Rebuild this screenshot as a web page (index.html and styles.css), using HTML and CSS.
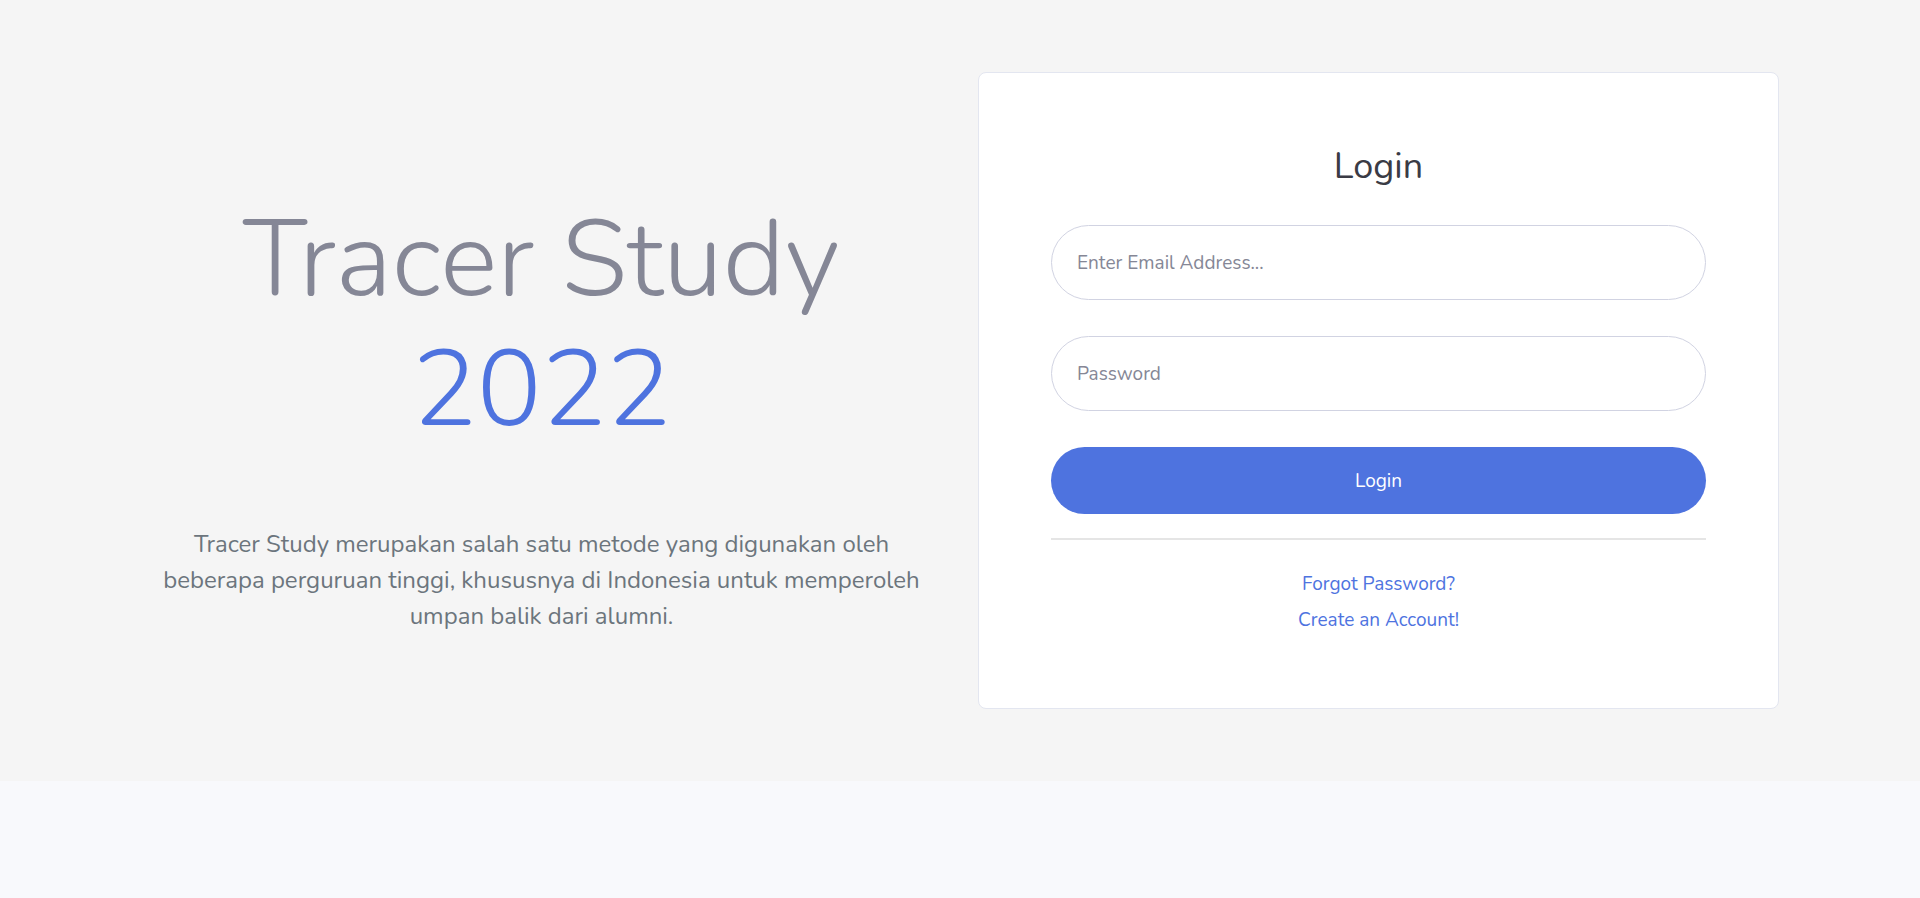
FILE: index.html
```html
<!DOCTYPE html>
<html lang="id">
<head>
<meta charset="utf-8">
<meta name="viewport" content="width=device-width, initial-scale=1">
<title>Tracer Study - Login</title>
<link rel="stylesheet" href="styles.css">
</head>
<body>
<main class="hero">
  <div class="container">
    <section class="intro">
      <h1 class="intro-title">Tracer Study <span class="intro-year">2022</span></h1>
      <p class="intro-text">Tracer Study merupakan salah satu metode yang digunakan oleh beberapa perguruan tinggi, khususnya di Indonesia untuk memperoleh umpan balik dari alumni.</p>
    </section>
    <section class="card">
      <h2 class="card-title">Login</h2>
      <form class="login-form">
        <input class="field" type="email" name="email" placeholder="Enter Email Address..." aria-label="Email address">
        <input class="field" type="password" name="password" placeholder="Password" aria-label="Password">
        <button class="submit" type="submit">Login</button>
      </form>
      <hr class="divider">
      <div class="link-row"><a class="link" href="#forgot">Forgot Password?</a></div>
      <div class="link-row"><a class="link" href="#register">Create an Account!</a></div>
    </section>
  </div>
</main>
</body>
</html>
```
FILE: styles.css
```css
*, *::before, *::after { box-sizing: border-box; }

body {
  margin: 0;
  background: #f8f9fc;
  color: #858796;
  font-family: Nunito, Lato, sans-serif;
  font-size: 24px;
  line-height: 36px;
}

.hero {
  background: #f5f5f5;
  padding: 72px 0;
}

.container {
  display: grid;
  grid-template-columns: repeat(2, minmax(0, 1fr));
  gap: 36px;
  max-width: 1710px;
  margin: 0 auto;
  padding: 0 36px;
}

.intro {
  padding-top: 123px;
  text-align: center;
}

.intro-title {
  margin: 0 0 71px;
  font-size: 108px;
  font-weight: 300;
  line-height: 130px;
}

.intro-year {
  display: block;
  color: #4e73df;
}

.intro-text {
  margin: 0;
  color: #6c757d;
}

.card {
  padding: 72px;
  background: #fff;
  border: 1px solid #e3e6f0;
  border-radius: 8px;
  text-align: center;
}

.card-title {
  margin: 0 0 36px;
  color: #3a3b45;
  font-size: 36px;
  font-weight: 400;
  line-height: 44px;
}

.login-form {
  display: flex;
  flex-direction: column;
  gap: 36px;
}

.field {
  width: 100%;
  height: 75px;
  padding: 0 25px;
  background: #fff;
  border: 1px solid #d1d3e2;
  border-radius: 40px;
  color: #6e707e;
  font: inherit;
  font-size: 19px;
}

.field::placeholder {
  color: #858796;
  opacity: 1;
}

.submit {
  height: 67px;
  padding: 0 24px;
  background: #4e73df;
  border: 0;
  border-radius: 40px;
  color: #fff;
  font: inherit;
  font-size: 19px;
  cursor: pointer;
}

.divider {
  height: 2px;
  margin: 24px 0;
  background: #e5e5e5;
  border: 0;
}

.link-row {
  height: 36px;
}

.link {
  color: #4e73df;
  font-size: 19px;
  line-height: 28px;
  text-decoration: none;
}
```
